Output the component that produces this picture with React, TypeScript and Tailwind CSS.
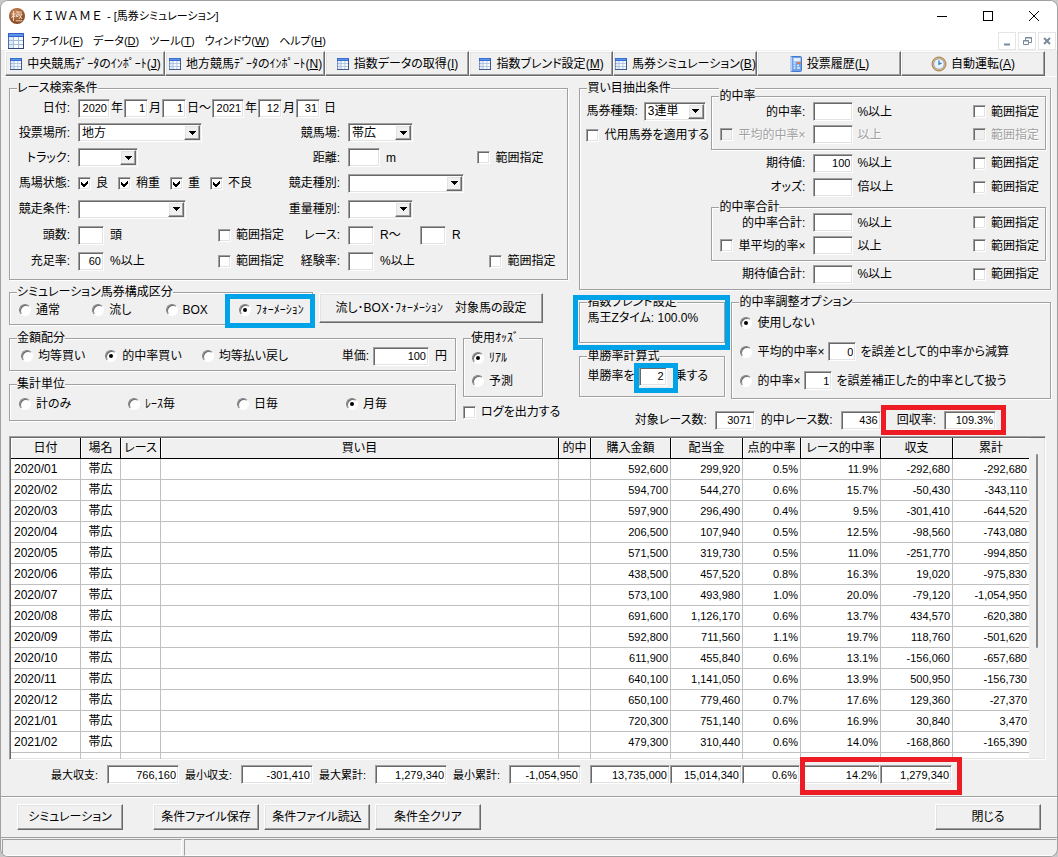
import type { ReactNode } from 'react';
import clsx from 'clsx';

const SUNKEN =
  'border border-t-[#a0a0a0] border-l-[#a0a0a0] border-b-white border-r-white shadow-[inset_1px_1px_0_#696969,inset_-1px_-1px_0_#e3e3e3]';
const RAISED =
  'border border-t-white border-l-white border-b-[#696969] border-r-[#696969] shadow-[inset_-1px_-1px_0_#a0a0a0,inset_1px_1px_0_#e3e3e3]';

const COLUMNS = [
  { title: '日付', width: 'w-[70px]' },
  { title: '場名', width: 'w-[40px]' },
  { title: 'レース', width: 'w-[40px]' },
  { title: '買い目', width: 'w-auto' },
  { title: '的中', width: 'w-[32px]' },
  { title: '購入金額', width: 'w-[80px]' },
  { title: '配当金', width: 'w-[72px]' },
  { title: '点的中率', width: 'w-[58px]' },
  { title: 'レース的中率', width: 'w-[80px]' },
  { title: '収支', width: 'w-[72px]' },
  { title: '累計', width: 'w-[76px]' },
];

const ROWS = [
  ['2020/01', '592,600', '299,920', '0.5%', '11.9%', '-292,680', '-292,680'],
  ['2020/02', '594,700', '544,270', '0.6%', '15.7%', '-50,430', '-343,110'],
  ['2020/03', '597,900', '296,490', '0.4%', '9.5%', '-301,410', '-644,520'],
  ['2020/04', '206,500', '107,940', '0.5%', '12.5%', '-98,560', '-743,080'],
  ['2020/05', '571,500', '319,730', '0.5%', '11.0%', '-251,770', '-994,850'],
  ['2020/06', '438,500', '457,520', '0.8%', '16.3%', '19,020', '-975,830'],
  ['2020/07', '573,100', '493,980', '1.0%', '20.0%', '-79,120', '-1,054,950'],
  ['2020/08', '691,600', '1,126,170', '0.6%', '13.7%', '434,570', '-620,380'],
  ['2020/09', '592,800', '711,560', '1.1%', '19.7%', '118,760', '-501,620'],
  ['2020/10', '611,900', '455,840', '0.6%', '13.1%', '-156,060', '-657,680'],
  ['2020/11', '640,100', '1,141,050', '0.6%', '13.9%', '500,950', '-156,730'],
  ['2020/12', '650,100', '779,460', '0.7%', '17.6%', '129,360', '-27,370'],
  ['2021/01', '720,300', '751,140', '0.6%', '16.9%', '30,840', '3,470'],
  ['2021/02', '479,300', '310,440', '0.6%', '14.0%', '-168,860', '-165,390'],
];

function TableIcon({ className }: { className: string }) {
  return (
    <svg viewBox="0 0 16 16" className={clsx('shrink-0', className)}>
      <rect width="16" height="16" fill="#4a6ea9" />
      <rect x="0" y="0" width="16" height="4" fill="#2f62c4" />
      <rect x="1" y="1" width="14" height="2" fill="#5d93ee" />
      <rect x="1" y="4" width="14" height="11" fill="#a3bad8" />
      {[4, 8, 12].map((y) =>
        [1, 6, 11].map((x) => (
          <rect key={`${x}-${y}`} x={x} y={y} width="4" height="3" fill={x === 1 ? '#dfe9f8' : '#f7faff'} />
        )),
      )}
      <rect x="15" y="3" width="1" height="13" fill="#2b4675" />
      <rect x="0" y="15" width="16" height="1" fill="#2b4675" />
    </svg>
  );
}

function NotebookIcon() {
  return (
    <svg viewBox="0 0 14 16" className="h-4 w-3.5 shrink-0">
      <rect x="1.5" y="0.5" width="11" height="15" rx="1" fill="#6fa0ea" stroke="#4a78c8" />
      <rect x="1" y="1" width="2" height="14" fill="#b9d1f6" />
      <rect x="4.5" y="2" width="7" height="3.5" fill="#e4effd" />
      <rect x="8.5" y="6" width="3" height="2" fill="#e8743b" />
      <path d="M4.5 7h2M4.5 9.5h2M8 9.5h2M4.5 12h2M8 12h3" stroke="#e4eefc" strokeWidth="1.3" />
    </svg>
  );
}

function ClockIcon() {
  return (
    <svg viewBox="0 0 16 16" className="size-4 shrink-0">
      <circle cx="8" cy="8" r="7" fill="#dcb377" stroke="#a5804c" />
      <circle cx="8" cy="8" r="5.2" fill="#e9f3fc" stroke="#8aa5bd" strokeWidth="0.8" />
      <path d="M8 4.6V8.2L10.6 7" fill="none" stroke="#3d74b8" strokeWidth="1.3" />
    </svg>
  );
}

function AppLogo() {
  return (
    <svg viewBox="0 0 16 16" className="size-4 shrink-0">
      <defs>
        <radialGradient id="ball" cx="0.4" cy="0.3" r="0.8">
          <stop offset="0" stopColor="#c98a5c" />
          <stop offset="1" stopColor="#7a3a17" />
        </radialGradient>
      </defs>
      <circle cx="8" cy="8" r="8" fill="url(#ball)" />
      <path
        d="M2.5 6h4M4.5 3v10M4.5 7l-2 3M4.5 7l1.6 2M7 4h6M9 4v4.5h-1.6V6.4M9.8 6h3.2l-3 5M10 6.5l3 4.5M6.8 12.8h6.6"
        fill="none"
        stroke="#f7e3d2"
        strokeWidth="0.9"
      />
    </svg>
  );
}

function Group({ title, className, children }: { title: string; className?: string; children: ReactNode }) {
  return (
    <fieldset
      className={clsx(
        'relative min-w-0 border border-[#a0a0a0] shadow-[1px_1px_0_#fff,inset_1px_1px_0_#fff]',
        className,
      )}
    >
      <legend className="ml-[7px] h-4 bg-[#f0f0f0] whitespace-nowrap">{title}</legend>
      {children}
    </fieldset>
  );
}

function Field({ id, name, value, className }: { id?: string; name?: string; value?: string; className: string }) {
  return (
    <input
      id={id}
      aria-label={name}
      type="text"
      defaultValue={value}
      className={clsx('h-[19px] shrink-0 bg-white px-0.5 text-right text-[11px] outline-none', SUNKEN, className)}
    />
  );
}

function Combo({ id, value, className }: { id: string; value?: string; className: string }) {
  return (
    <span className={clsx('relative inline-flex h-[19px] shrink-0 bg-white', SUNKEN, className)}>
      <select id={id} defaultValue={value} className="w-full appearance-none bg-transparent pl-[3px] leading-4 outline-none">
        <option>{value}</option>
      </select>
      <span
        className={clsx(
          'pointer-events-none absolute top-px right-px flex h-[15px] w-4 items-center justify-center bg-[#f0f0f0]',
          RAISED,
        )}
      >
        <svg viewBox="0 0 7 4" className="h-1 w-[7px]" shapeRendering="crispEdges">
          <path d="M0 0h7L3.5 4z" />
        </svg>
      </span>
    </span>
  );
}

function Check({ label, checked, disabled }: { label: string; checked?: boolean; disabled?: boolean }) {
  return (
    <label
      className={clsx(
        'relative flex shrink-0 items-center gap-[5px] whitespace-nowrap',
        disabled && 'text-[#a0a0a0] [text-shadow:1px_1px_0_#fff]',
      )}
    >
      <input
        type="checkbox"
        defaultChecked={checked}
        disabled={disabled}
        className={clsx('peer size-[13px] appearance-none bg-white disabled:bg-[#f0f0f0]', SUNKEN)}
      />
      <svg viewBox="0 0 7 7" className="absolute left-[3px] hidden size-[7px] peer-checked:block" shapeRendering="crispEdges">
        <path d="M0 2v3l2 2h1l4-4V0L3 4H2z" />
      </svg>
      {label}
    </label>
  );
}

function Radio({ name, label, checked }: { name: string; label: string; checked?: boolean }) {
  return (
    <label className="relative flex shrink-0 items-center gap-[5px] whitespace-nowrap">
      <input
        type="radio"
        name={name}
        defaultChecked={checked}
        className="peer size-3 appearance-none rounded-full border border-t-[#808080] border-r-white border-b-white border-l-[#808080] bg-white shadow-[inset_1px_1px_0_#696969]"
      />
      <span className="absolute left-1 hidden size-1 rounded-full bg-black peer-checked:block" />
      {label}
    </label>
  );
}

function RowLabel({ id, children }: { id?: string; children: ReactNode }) {
  return (
    <label htmlFor={id} className="pr-2 text-right whitespace-nowrap">
      {children}
    </label>
  );
}

function PushButton({ className, children }: { className: string; children: ReactNode }) {
  return (
    <button type="button" className={clsx('shrink-0 bg-[#f0f0f0] whitespace-nowrap', RAISED, className)}>
      {children}
    </button>
  );
}

// One threshold line: label, value, unit and its range toggle
function Threshold(props: {
  id: string;
  label: string;
  unit: string;
  value?: string;
  toggle?: boolean;
  disabled?: boolean;
  className: string;
}) {
  const { id, label, unit, value, toggle, disabled, className } = props;
  return (
    <div className={clsx('flex items-center', className)}>
      <div className="flex w-[101px] shrink-0 justify-end pr-2">
        {toggle ? <Check label={label} disabled={disabled} /> : <label htmlFor={id}>{label}</label>}
      </div>
      <Field id={id} name={label} value={value} className="w-10" />
      <span className={clsx('pl-1', disabled && 'text-[#a0a0a0] [text-shadow:1px_1px_0_#fff]')}>{unit}</span>
      <div className="ml-auto pr-1.5">
        <Check label="範囲指定" disabled={disabled} />
      </div>
    </div>
  );
}

function TitleBar() {
  return (
    <header className="bg-white">
      <div className="flex h-[30px] items-center pl-2">
        <AppLogo />
        <h1 className="ml-1.5 flex items-center gap-1 text-[11px]">
          <span className="text-xs [font-feature-settings:normal]">ＫＩＷＡＭＥ</span>
          <span>- [馬券シミュレーション]</span>
        </h1>
        <div className="ml-auto flex">
          <button type="button" aria-label="最小化" className="flex w-[46px] justify-center">
            <svg viewBox="0 0 10 10" className="size-2.5"><path d="M0 5.5h10" stroke="#000" /></svg>
          </button>
          <button type="button" aria-label="最大化" className="flex w-[46px] justify-center">
            <svg viewBox="0 0 10 10" className="size-2.5"><rect x="0.5" y="0.5" width="9" height="9" fill="none" stroke="#000" /></svg>
          </button>
          <button type="button" aria-label="閉じる" className="flex w-[46px] justify-center">
            <svg viewBox="0 0 10 10" className="size-2.5"><path d="M0 0l10 10M10 0L0 10" stroke="#000" /></svg>
          </button>
        </div>
      </div>
      <nav className="flex h-[19px] items-center pl-[7px]">
        <TableIcon className="size-4" />
        <div className="ml-[7px] flex gap-2.5 text-[11px]">
          {[
            ['ファイル', 'F'],
            ['データ', 'D'],
            ['ツール', 'T'],
            ['ウィンドウ', 'W'],
            ['ヘルプ', 'H'],
          ].map(([text, key]) => (
            <button key={key} type="button">
              {text}(<u>{key}</u>)
            </button>
          ))}
        </div>
        <div className="ml-auto flex gap-0.5 pr-px">
          <button type="button" aria-label="子ウィンドウを最小化" className="size-[18px] border border-[#e5e5e5] text-[#7a8a9e]">
            <svg viewBox="0 0 16 16"><path d="M5 11.5h6" stroke="currentColor" strokeWidth="2" /></svg>
          </button>
          <button type="button" aria-label="子ウィンドウを元に戻す" className="size-[18px] border border-[#e5e5e5] text-[#7a8a9e]">
            <svg viewBox="0 0 16 16" fill="none" stroke="currentColor">
              <path d="M6.5 7V4.5h6v5H10M6 5h7" />
              <path d="M4.5 7.5h5v4h-5zM4 8h6" />
            </svg>
          </button>
          <button type="button" aria-label="子ウィンドウを閉じる" className="size-[18px] border border-[#e5e5e5] text-[#7a8a9e]">
            <svg viewBox="0 0 16 16"><path d="M5 5l6 6M11 5l-6 6" stroke="currentColor" strokeWidth="2" /></svg>
          </button>
        </div>
      </nav>
    </header>
  );
}

const TOOLS = [
  { text: '中央競馬ﾃﾞｰﾀのｲﾝﾎﾟｰﾄ', key: 'J' },
  { text: '地方競馬ﾃﾞｰﾀのｲﾝﾎﾟｰﾄ', key: 'N' },
  { text: '指数データの取得', key: 'I' },
  { text: '指数ブレンド設定', key: 'M' },
  { text: '馬券シミュレーション', key: 'B' },
  { text: '投票履歴', key: 'L' },
  { text: '自動運転', key: 'A' },
];

function Toolbar() {
  return (
    <div className="mt-px grid h-[25px] grid-cols-[160fr_160fr_144fr_144fr_144fr_144fr_144fr] pr-3 pl-1">
      {TOOLS.map(({ text, key }) => (
        <button
          key={key}
          type="button"
          className={clsx('flex min-w-0 items-center justify-center gap-1 whitespace-nowrap', RAISED)}
        >
          {key === 'L' ? <NotebookIcon /> : key === 'A' ? <ClockIcon /> : <TableIcon className="h-3 w-3.5" />}
          <span>
            {text}(<u>{key}</u>)
          </span>
        </button>
      ))}
    </div>
  );
}

function RaceSearch() {
  return (
    <Group title="レース検索条件" className="pb-[5px]">
      <div className="grid grid-cols-[68px_206px_64px_1fr] grid-rows-[24px_25px_25px_26px_26px_26px_26px] items-center">
        <RowLabel id="from-year">日付:</RowLabel>
        <div className="col-span-3 flex items-center">
          <Field id="from-year" value="2020" className="w-8" />
          <span className="px-px">年</span>
          <Field name="開始月" value="1" className="w-6" />
          <span className="px-px">月</span>
          <Field name="開始日" value="1" className="w-6" />
          <span className="px-px">日～</span>
          <Field name="終了年" value="2021" className="w-8" />
          <span className="px-px">年</span>
          <Field name="終了月" value="12" className="w-6" />
          <span className="px-px">月</span>
          <Field name="終了日" value="31" className="w-6" />
          <span className="px-1">日</span>
        </div>

        <RowLabel id="place">投票場所:</RowLabel>
        <Combo id="place" value="地方" className="w-[124px]" />
        <RowLabel id="course">競馬場:</RowLabel>
        <Combo id="course" value="帯広" className="w-[65px]" />

        <RowLabel id="track">トラック:</RowLabel>
        <Combo id="track" className="w-[60px]" />
        <RowLabel id="distance">距離:</RowLabel>
        <div className="flex items-center">
          <Field id="distance" className="w-8" />
          <span className="pl-1.5">m</span>
          <div className="ml-auto pr-6">
            <Check label="範囲指定" />
          </div>
        </div>

        <span className="pr-2 text-right whitespace-nowrap">馬場状態:</span>
        <div className="flex gap-2.5">
          <Check label="良" checked />
          <Check label="稍重" checked />
          <Check label="重" checked />
          <Check label="不良" checked />
        </div>
        <RowLabel id="race-kind">競走種別:</RowLabel>
        <Combo id="race-kind" className="w-[116px]" />

        <RowLabel id="race-cond">競走条件:</RowLabel>
        <Combo id="race-cond" className="w-[108px]" />
        <RowLabel id="weight-kind">重量種別:</RowLabel>
        <Combo id="weight-kind" className="w-[65px]" />

        <RowLabel id="heads">頭数:</RowLabel>
        <div className="flex items-center">
          <Field id="heads" className="w-[26px]" />
          <span className="pl-1.5">頭</span>
          <div className="ml-auto">
            <Check label="範囲指定" />
          </div>
        </div>
        <RowLabel id="race-from">レース:</RowLabel>
        <div className="flex items-center">
          <Field id="race-from" className="w-[26px]" />
          <span className="w-[46px] pl-1.5">R～</span>
          <Field name="終了レース" className="w-[26px]" />
          <span className="pl-1.5">R</span>
        </div>

        <RowLabel id="fill">充足率:</RowLabel>
        <div className="flex items-center">
          <Field id="fill" value="60" className="w-[26px]" />
          <span className="pl-1.5">%以上</span>
          <div className="ml-auto">
            <Check label="範囲指定" />
          </div>
        </div>
        <RowLabel id="exp">経験率:</RowLabel>
        <div className="flex items-center">
          <Field id="exp" className="w-[26px]" />
          <span className="pl-1.5">%以上</span>
          <div className="ml-auto pr-3">
            <Check label="範囲指定" />
          </div>
        </div>
      </div>
    </Group>
  );
}

function BetSettings() {
  return (
    <>
      <div className="mt-1 flex items-end gap-1.5">
        <Group title="シミュレーション馬券構成区分" className="w-[304px] pb-1">
          <div className="grid h-5 grid-cols-4 items-center pl-[9px]">
            <Radio name="form" label="通常" />
            <Radio name="form" label="流し" />
            <Radio name="form" label="BOX" />
            <Radio name="form" label="ﾌｫｰﾒｰｼｮﾝ" checked />
          </div>
          <div className="pointer-events-none absolute -top-1.5 left-[215px] z-10 h-[34px] w-[90px] border-[5px] border-[#00a2e8]" />
        </Group>
        <PushButton className="mb-0.5 h-[30px] w-[224px]">流し･BOX･ﾌｫｰﾒｰｼｮﾝ　対象馬の設定</PushButton>
      </div>

      <div className="mt-[5px] flex gap-[7px]">
        <div className="flex w-[447px] flex-col gap-[5px]">
          <Group title="金額配分" className="pb-1">
            <div className="flex h-5 items-center pl-[11px]">
              <div className="flex gap-5">
                <Radio name="split" label="均等買い" />
                <Radio name="split" label="的中率買い" checked />
                <Radio name="split" label="均等払い戻し" />
              </div>
              <label htmlFor="unit" className="ml-auto pr-1">単価:</label>
              <Field id="unit" value="100" className="w-14" />
              <span className="pr-2 pl-1.5">円</span>
            </div>
          </Group>
          <Group title="集計単位" className="pb-1">
            <div className="grid h-6 grid-cols-4 items-center pl-[9px]">
              <Radio name="sum" label="計のみ" />
              <Radio name="sum" label="ﾚｰｽ毎" />
              <Radio name="sum" label="日毎" />
              <Radio name="sum" label="月毎" checked />
            </div>
          </Group>
        </div>
        <div className="flex flex-col items-start gap-[7px]">
          <Group title="使用ｵｯｽﾞ" className="w-20 pb-1">
            <div className="grid auto-rows-[23px] items-center pl-2">
              <Radio name="odds" label="ﾘｱﾙ" checked />
              <Radio name="odds" label="予測" />
            </div>
          </Group>
          <Check label="ログを出力する" />
        </div>
      </div>
    </>
  );
}

function BetExtraction() {
  return (
    <Group title="買い目抽出条件" className="pb-[3px]">
      <div className="flex pr-1">
        <div className="flex w-[131px] shrink-0 flex-col pt-[3px] pl-1.5">
          <div className="flex h-6 items-center gap-1.5">
            <label htmlFor="ticket" className="whitespace-nowrap">馬券種類:</label>
            <Combo id="ticket" value="3連単" className="w-[62px]" />
          </div>
          <div className="flex h-6 items-center">
            <Check label="代用馬券を適用する" />
          </div>
        </div>
        <div className="-mt-2 min-w-0 flex-1">
          <Group title="的中率" className="pb-[3px]">
            <div className="-mt-1">
              <Threshold id="hit" label="的中率:" unit="%以上" className="h-[23px]" />
              <Threshold id="hit-avg" label="平均的中率×" unit="以上" toggle disabled className="h-[23px]" />
            </div>
          </Group>
          <div className="mt-px px-px">
            <Threshold id="expect" label="期待値:" unit="%以上" value="100" className="h-6" />
            <Threshold id="odds" label="オッズ:" unit="倍以上" className="h-6" />
          </div>
          <Group title="的中率合計" className="pb-[3px]">
            <div className="-mt-1">
              <Threshold id="hit-sum" label="的中率合計:" unit="%以上" className="h-[23px]" />
              <Threshold id="hit-single" label="単平均的率×" unit="以上" toggle className="h-[23px]" />
            </div>
          </Group>
          <div className="mt-px px-px">
            <Threshold id="expect-sum" label="期待値合計:" unit="%以上" className="h-6" />
          </div>
        </div>
      </div>
    </Group>
  );
}

function RateOptions() {
  return (
    <div className="mt-1 grid grid-cols-[146px_1fr] gap-[6px]">
      <div className="flex flex-col gap-[5px]">
        <Group title="指数ブレンド設定" className="pb-4">
          <p className="h-4 pl-[7px]">馬王Zタイム: 100.0%</p>
          <div className="pointer-events-none absolute -top-[15px] -left-[7px] z-10 h-[55px] w-[157px] border-[5px] border-[#00a2e8]" />
        </Group>
        <Group title="単勝率計算式" className="pb-2">
          <div className="flex h-6 items-center gap-1 pl-[7px]">
            <label htmlFor="power">単勝率を</label>
            <Field id="power" value="2" className="w-7" />
            <span className="pl-1">乗する</span>
          </div>
          <div className="pointer-events-none absolute -top-px left-[54px] z-10 h-[30px] w-11 border-[5px] border-[#00a2e8]" />
        </Group>
      </div>
      <Group title="的中率調整オプション" className="pb-[3px]">
        <div className="-mt-0.5 grid auto-rows-[29px] pl-2">
          <div className="flex items-center">
            <Radio name="adjust" label="使用しない" checked />
          </div>
          <div className="flex items-center gap-1">
            <Radio name="adjust" label="平均的中率×" />
            <Field name="誤差" value="0" className="w-7" />
            <span className="whitespace-nowrap">を誤差として的中率から減算</span>
          </div>
          <div className="flex items-center gap-1">
            <Radio name="adjust" label="的中率×" />
            <Field name="誤差補正" value="1" className="w-7" />
            <span className="whitespace-nowrap">を誤差補正した的中率として扱う</span>
          </div>
        </div>
      </Group>
    </div>
  );
}

function Stats() {
  return (
    <div className="mt-[11px] flex h-5 items-center justify-end pr-[55px] whitespace-nowrap">
      <label htmlFor="races" className="pr-2">対象レース数:</label>
      <Field id="races" value="3071" className="w-10" />
      <label htmlFor="hits" className="pr-2 pl-1.5">的中レース数:</label>
      <Field id="hits" value="436" className="w-10" />
      <div className="relative flex items-center pl-4">
        <label htmlFor="return" className="pr-2">回収率:</label>
        <Field id="return" value="109.3%" className="w-[52px]" />
        <div className="pointer-events-none absolute -top-1.5 -right-2.5 left-0 h-[30px] border-[5px] border-[#ed1c24]" />
      </div>
    </div>
  );
}

function ResultTable() {
  return (
    <div className={clsx('mt-1.5 mr-[5px] flex h-[324px] overflow-hidden bg-white p-px', SUNKEN)}>
      <div className="min-w-0 flex-1">
        <table className="w-full table-fixed border-separate border-spacing-0">
          <thead>
            <tr className="h-[21px]">
              {COLUMNS.map(({ title, width }) => (
                <th
                  key={title}
                  className={clsx(
                    'border-r border-b border-black bg-[#f0f0f0] p-0 font-normal whitespace-nowrap shadow-[inset_1px_1px_0_#fff] last:border-r-0',
                    width,
                  )}
                >
                  {title}
                </th>
              ))}
            </tr>
          </thead>
          <tbody className="[&_td]:border-r [&_td]:border-b [&_td]:border-[#c0c0c0] [&_td]:py-0 [&_td:last-child]:border-r-0">
            {ROWS.map(([date, ...values]) => (
              <tr key={date} className="h-[21px]">
                <td className="pl-[3px]">{date}</td>
                <td className="text-center">帯広</td>
                <td />
                <td />
                <td />
                {values.map((value, i) => (
                  <td key={i} className="pr-0.5 text-right text-[11px]">
                    {value}
                  </td>
                ))}
              </tr>
            ))}
            <tr className="h-[21px]">
              {COLUMNS.map(({ title }) => (
                <td key={title} />
              ))}
            </tr>
          </tbody>
        </table>
      </div>
      <div className="w-[15px] shrink-0 bg-[#f0f0f0] pt-4 pl-[7px]">
        <div className="h-[194px] w-0.5 rounded-full bg-[#8a8a8a]" />
      </div>
    </div>
  );
}

function Summary() {
  return (
    <div className="mt-[5px] flex h-[19px] items-center pl-[42px]">
      {[
        ['最大収支', '766,160'],
        ['最小収支', '-301,410'],
        ['最大累計', '1,279,340'],
        ['最小累計', '-1,054,950'],
      ].map(([label, value]) => (
        <div key={label} className="flex w-[134px] shrink-0 items-center">
          <label htmlFor={label} className="w-14 text-[11px]">{label}:</label>
          <Field id={label} value={value} className="w-[72px]" />
        </div>
      ))}
      <div className="ml-[3px] flex">
        <Field name="購入金額合計" value="13,735,000" className="w-20" />
        <Field name="配当金合計" value="15,014,340" className="w-[72px]" />
        <Field name="点的中率平均" value="0.6%" className="w-[58px]" />
        <div className="relative flex">
          <Field name="レース的中率平均" value="14.2%" className="w-20" />
          <Field name="収支合計" value="1,279,340" className="w-[72px]" />
          <div className="pointer-events-none absolute -top-2 -right-2.5 left-0 h-[38px] border-[5px] border-[#ed1c24]" />
        </div>
      </div>
    </div>
  );
}

export default function App() {
  return (
    <div className="min-h-screen bg-[#c8c8c8] font-['Liberation_Sans','Noto_Sans_CJK_JP',sans-serif] text-xs leading-4 text-black [font-feature-settings:'palt']">
      <div className="flex min-h-screen flex-col overflow-hidden rounded-lg border border-[#a0a0a0] bg-[#f0f0f0]">
        <TitleBar />
        <Toolbar />

        <main className="border-t border-white pt-[3px] pr-1.5 pl-2">
          <div className="grid grid-cols-[560fr_472fr] gap-[11px]">
            <div className="min-w-0">
              <RaceSearch />
              <BetSettings />
            </div>
            <div className="min-w-0">
              <BetExtraction />
              <RateOptions />
              <Stats />
            </div>
          </div>
          <ResultTable />
          <Summary />
        </main>

        <div className="mt-3 flex h-[42px] items-center border-y border-[#a0a0a0] pr-4 pl-4 shadow-[inset_0_1px_0_#fff]">
          <PushButton className="h-[26px] w-[106px]">シミュレーション</PushButton>
          <div className="ml-[30px] flex gap-[5px]">
            <PushButton className="h-[26px] w-[106px]">条件ファイル保存</PushButton>
            <PushButton className="h-[26px] w-[106px]">条件ファイル読込</PushButton>
            <PushButton className="h-[26px] w-[106px]">条件全クリア</PushButton>
          </div>
          <PushButton className="ml-auto h-[26px] w-[106px]">閉じる</PushButton>
        </div>

        <footer className="mt-px flex flex-1 gap-0.5 pl-px">
          <div className="w-[180px] border border-t-[#a0a0a0] border-r-white border-b-white border-l-[#a0a0a0]" />
          <div className="flex-1 border border-t-[#a0a0a0] border-r-transparent border-b-white border-l-[#a0a0a0]" />
        </footer>
      </div>
    </div>
  );
}
